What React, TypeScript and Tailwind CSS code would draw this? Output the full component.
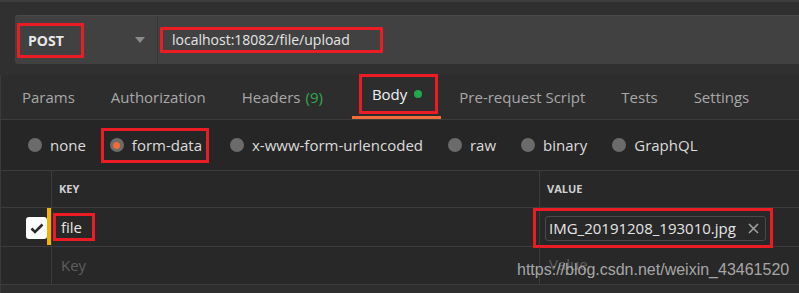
import React from "react";

const tabs = [
  { label: "Params" },
  { label: "Authorization" },
  { label: "Headers", count: "(9)" },
  { label: "Body", active: true },
  { label: "Pre-request Script" },
  { label: "Tests" },
  { label: "Settings" },
];

const modes = ["none", "form-data", "x-www-form-urlencoded", "raw", "binary", "GraphQL"];

function Radio({ on }: { on?: boolean }) {
  return (
    <span className="w-[14px] h-[14px] rounded-full bg-[#6b6b6b] flex items-center justify-center shrink-0">
      {on && <span className="w-[7px] h-[7px] rounded-full bg-[#f26b3a]" />}
    </span>
  );
}

export default function App() {
  return (
    <div className="relative w-[799px] h-[293px] overflow-hidden bg-[#282828] text-[#d8d8d8] font-['Open_Sans',sans-serif]">
      {/* request bar */}
      <div className="h-[75px] bg-[#303030] border-t-2 border-[#3d3d3d] pl-[15px] pt-[13px]">
        <div className="h-[49px] bg-[#414141] border-t border-[#4a4a4a] rounded-l-[3px] flex items-center">
          <div className="w-[143px] h-full flex items-center border-r border-[#353535] pl-[2px]">
            <div className="w-[67px] h-[35px] border-[3px] border-[#ec1c24] flex items-center pl-[8px]">
              <span className="text-[14px] font-bold text-[#e8e8e8]">POST</span>
            </div>
            <svg width="10" height="6" viewBox="0 0 10 6" className="ml-[51px]">
              <path d="M0 0 L10 0 L5 6 Z" fill="#8a8a8a" />
            </svg>
          </div>
          <div className="ml-[2px] w-[223px] h-[26px] border-[3px] border-[#ec1c24] flex items-center pl-[9px]">
            <span className="text-[14px] text-[#e6e6e6] leading-none">localhost:18082/file/upload</span>
          </div>
        </div>
      </div>

      {/* tabs */}
      <div className="h-[45px] bg-[#2d2d2d] border-b border-[#3c3c3c] border-l border-l-[#3a3a3a] flex items-stretch pl-[3px]">
        {tabs.map((t) =>
          t.active ? (
            <div key={t.label} className="relative ml-[11px] pl-[7px] pr-[3px] flex items-start">
              <div className="h-[40px] border-[3px] border-[#ec1c24] flex items-center gap-[7px] pl-[10px] pr-[13px] mt-[-1px]">
                <span className="text-[15px] text-[#f2f2f2]">{t.label}</span>
                <span className="w-[8px] h-[8px] rounded-full bg-[#26a84a]" />
              </div>
              <div className="absolute left-0 right-0 bottom-[0px] h-[3px] bg-[#f26b3a]" />
            </div>
          ) : (
            <div key={t.label} className="px-[18px] flex items-center text-[15px] text-[#a8a8a8]">
              {t.label}
              {t.count && <span className="ml-[5px] text-[#2faa4e]">{t.count}</span>}
            </div>
          )
        )}
      </div>

      {/* body modes */}
      <div className="h-[51px] bg-[#262626] border-b border-[#3c3c3c] border-l border-l-[#3a3a3a] flex items-center pl-[27px] gap-[25px]">
        {modes.map((m) =>
          m === "form-data" ? (
            <div key={m} className="-ml-[10px] -mr-[4px] h-[35px] border-[3px] border-[#ec1c24] flex items-center gap-[8px] pl-[6px] pr-[4px]">
              <Radio on />
              <span className="text-[15px] text-[#dcdcdc]">{m}</span>
            </div>
          ) : (
            <div key={m} className="flex items-center gap-[8px]">
              <Radio />
              <span className="text-[15px] text-[#dcdcdc]">{m}</span>
            </div>
          )
        )}
      </div>

      {/* table */}
      <div className="border-l border-[#3a3a3a]">
        <div className="h-[37px] grid grid-cols-[51px_488px_1fr] border-b border-[#3c3c3c]">
          <div className="border-r border-[#3c3c3c]" />
          <div className="border-r border-[#3c3c3c] flex items-center pl-[7px] text-[11px] font-bold text-[#d0d0d0]">KEY</div>
          <div className="flex items-center pl-[7px] text-[11px] font-bold text-[#d0d0d0]">VALUE</div>
        </div>
        <div className="h-[39px] grid grid-cols-[51px_488px_1fr] border-b border-[#3c3c3c]">
          <div className="relative border-r border-[#3c3c3c] flex items-center pl-[25px]">
            <div className="w-[21px] h-[22px] rounded-[3px] bg-white flex items-center justify-center">
              <svg width="14" height="11" viewBox="0 0 14 11">
                <path d="M1.5 5.5 L5 9 L12.5 1.5" stroke="#2a2a2a" strokeWidth="2.6" fill="none" />
              </svg>
            </div>
            <div className="absolute right-0 top-0 h-[37px] w-[4px] bg-[#f5b301]" />
          </div>
          <div className="border-r border-[#3c3c3c] flex items-center pl-[1px]">
            <div className="w-[42px] h-[28px] border-[3px] border-[#ec1c24] flex items-center pl-[5px] mt-[-2px]">
              <span className="text-[15px] text-[#e6e6e6]">file</span>
            </div>
          </div>
          <div className="flex items-center">
            <div className="-ml-[7px] w-[240px] h-[40px] border-[3px] border-[#ec1c24] flex items-center pl-[9px]">
              <div className="w-[221px] h-[25px] rounded-[3px] border border-[#4a4a4a] flex items-center justify-between pl-[3px] pr-[6px]">
                <span className="text-[15px] text-[#e6e6e6]">IMG_20191208_193010.jpg</span>
                <svg width="11" height="11" viewBox="0 0 11 11">
                  <path d="M1 1 L10 10 M10 1 L1 10" stroke="#a0a0a0" strokeWidth="1.6" />
                </svg>
              </div>
            </div>
          </div>
        </div>
        <div className="h-[38px] grid grid-cols-[51px_488px_1fr] border-b border-[#3c3c3c]">
          <div className="border-r border-[#3c3c3c]" />
          <div className="border-r border-[#3c3c3c] flex items-center pl-[9px] text-[15px] text-[#5e5e5e]">Key</div>
          <div className="flex items-start pt-[6px] pl-[9px] text-[15px] text-[#5e5e5e]">Value</div>
        </div>
        <div className="h-[8px] bg-[#2e2e2e]" />
      </div>

      {/* watermark */}
      <div className="absolute left-[517px] top-[258px] text-[16px] text-[#c8c8c8]/80 font-['Liberation_Sans',Arial,sans-serif]">
        https://blog.csdn.net/weixin_43461520
      </div>
    </div>
  );
}
